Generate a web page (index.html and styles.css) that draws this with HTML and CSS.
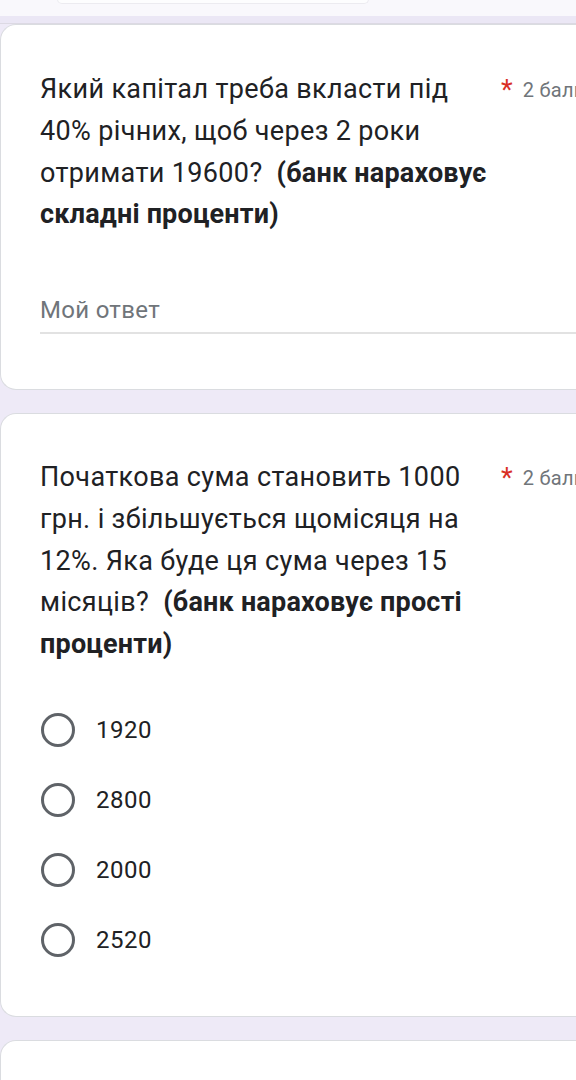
FILE: index.html
```html
<!DOCTYPE html>
<html lang="uk">
<head>
<meta charset="utf-8">
<link rel="stylesheet" href="styles.css">
</head>
<body>
<div class="top">
  <div class="pill"></div>
</div>
<div class="band"></div>
<div class="card card-one">
  <div class="head">
    <div class="question">Який капітал треба вкласти під 40% річних, щоб через 2 роки отримати 19600?&nbsp; <b>(банк нараховує складні проценти)</b></div>
    <div class="meta"><span class="req">*</span><span class="points">2 бали</span></div>
  </div>
  <div class="answer">Мой ответ</div>
</div>
<div class="card card-two">
  <div class="head">
    <div class="question">Початкова сума становить 1000 грн. і збільшується щомісяця на 12%. Яка буде ця сума через 15 місяців?&nbsp; <b>(банк нараховує прості проценти)</b></div>
    <div class="meta"><span class="req">*</span><span class="points">2 бали</span></div>
  </div>
  <div class="options">
    <div class="option"><span class="radio"></span><span class="label">1920</span></div>
    <div class="option"><span class="radio"></span><span class="label">2800</span></div>
    <div class="option"><span class="radio"></span><span class="label">2000</span></div>
    <div class="option"><span class="radio"></span><span class="label">2520</span></div>
  </div>
</div>
<div class="card card-three"></div>
</body>
</html>
```
FILE: styles.css
```css
html, body {
  margin: 0;
  padding: 0;
  overflow: hidden;
}
body {
  width: 576px;
  height: 1080px;
  background: #eeeaf7;
  font-family: Roboto, "Noto Sans", "Liberation Sans", sans-serif;
  color: #202124;
}
.top {
  height: 16px;
  background: #f9f8fc;
  overflow: hidden;
}
.pill {
  margin-left: 57px;
  width: 310px;
  height: 4px;
  margin-top: -1px;
  background: #fdfdfe;
  border-radius: 0 0 10px 10px;
  border: 1px solid #ecebf0;
  border-top: none;
}
.band {
  height: 7px;
  background: #ebe7f5;
  border-bottom: 1px solid #dcd9e3;
}
.card {
  background: #ffffff;
  border: 1px solid #dadce0;
  border-right: none;
  border-radius: 16px 0 0 16px;
  width: 620px;
  box-sizing: border-box;
  padding-left: 39px;
}
.card-one {
  height: 366px;
  padding-top: 44px;
}
.card-two {
  margin-top: 23px;
  height: 604px;
  padding-top: 43px;
}
.card-three {
  margin-top: 23px;
  height: 60px;
}
.head {
  display: flex;
  align-items: flex-start;
}
.question {
  flex: 0 0 460px;
  font-size: 27px;
  line-height: 41.8px;
  letter-spacing: 0.35px;
}
.question b {
  font-weight: 700;
  letter-spacing: 0.2px;
}
.meta {
  margin-left: 1px;
  display: flex;
  align-items: flex-start;
  gap: 10px;
  white-space: nowrap;
  padding-top: 6px;
}
.req {
  color: #d93025;
  font-size: 27px;
  line-height: 30px;
}
.points {
  color: #70757a;
  font-size: 20px;
  line-height: 30px;
  letter-spacing: 0.3px;
}
.answer {
  margin-top: 58px;
  font-size: 24px;
  line-height: 32px;
  letter-spacing: 0.3px;
  color: #70757a;
  padding-bottom: 6px;
  border-bottom: 2px solid #e2e2e2;
}
.options {
  margin-top: 29px;
  display: flex;
  flex-direction: column;
}
.option {
  height: 70px;
  display: flex;
  align-items: center;
}
.radio {
  width: 34px;
  height: 34px;
  box-sizing: border-box;
  border: 3px solid #5f6368;
  border-radius: 50%;
  margin-left: 1px;
}
.label {
  margin-left: 21px;
  font-size: 24px;
  letter-spacing: 0.5px;
}
```
